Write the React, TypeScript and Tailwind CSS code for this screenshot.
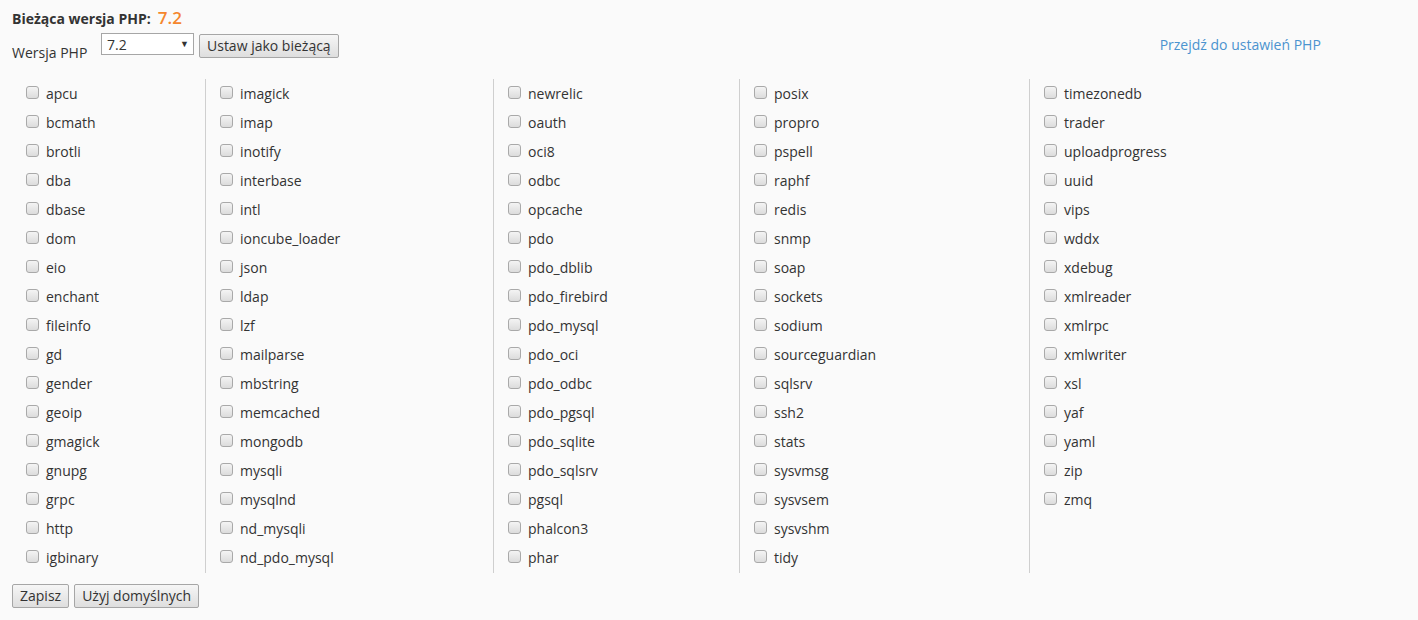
const columns: string[][] = [
  ["apcu", "bcmath", "brotli", "dba", "dbase", "dom", "eio", "enchant", "fileinfo", "gd", "gender", "geoip", "gmagick", "gnupg", "grpc", "http", "igbinary"],
  ["imagick", "imap", "inotify", "interbase", "intl", "ioncube_loader", "json", "ldap", "lzf", "mailparse", "mbstring", "memcached", "mongodb", "mysqli", "mysqlnd", "nd_mysqli", "nd_pdo_mysql"],
  ["newrelic", "oauth", "oci8", "odbc", "opcache", "pdo", "pdo_dblib", "pdo_firebird", "pdo_mysql", "pdo_oci", "pdo_odbc", "pdo_pgsql", "pdo_sqlite", "pdo_sqlsrv", "pgsql", "phalcon3", "phar"],
  ["posix", "propro", "pspell", "raphf", "redis", "snmp", "soap", "sockets", "sodium", "sourceguardian", "sqlsrv", "ssh2", "stats", "sysvmsg", "sysvsem", "sysvshm", "tidy"],
  ["timezonedb", "trader", "uploadprogress", "uuid", "vips", "wddx", "xdebug", "xmlreader", "xmlrpc", "xmlwriter", "xsl", "yaf", "yaml", "zip", "zmq"],
];

const colWidths = ["w-[193px]", "w-[288px]", "w-[246px]", "w-[290px]", "w-[200px]"];

function Box() {
  return (
    <span className="block w-[13px] h-[13px] mb-[2px] rounded-[3px] border border-[#a9a9a9] bg-gradient-to-b from-[#f4f4f4] to-[#dcdcdc] shrink-0" />
  );
}

function Btn({ children }: { children: React.ReactNode }) {
  return (
    <button className="h-[24px] px-[7px] border border-[#a6a6a6] rounded-[2px] bg-gradient-to-b from-[#f6f6f6] to-[#dedede] text-[14px] text-[#333] leading-none">
      {children}
    </button>
  );
}

export default function App() {
  return (
    <div
      className="w-[1418px] h-[620px] bg-[#fafafa] text-[#333] pl-[12px] pt-[5px]"
      style={{ fontFamily: '"Open Sans", "Liberation Sans", sans-serif' }}
    >
      <div className="flex items-baseline gap-[7px] h-[23px]">
        <span className="text-[14px] font-bold">Bieżąca wersja PHP:</span>
        <span className="text-[17px] font-semibold text-[#f5862d]">7.2</span>
      </div>
      <div className="flex items-start h-[46px] mt-[5px]">
        <span className="text-[14px] mt-[9px] w-[89px]">Wersja PHP</span>
        <div className="flex items-center justify-between w-[93px] h-[22px] border border-[#a6a6a6] bg-white pl-[5px] pr-[4px] text-[14px]">
          <span>7.2</span>
          <span className="text-[9px]">▼</span>
        </div>
        <div className="ml-[5px]">
          <Btn>Ustaw jako bieżącą</Btn>
        </div>
        <a className="ml-[821px] mt-[1px] text-[14px] text-[#4b93cf]">Przejdź do ustawień PHP</a>
      </div>
      <div className="flex">
        {columns.map((col, i) => (
          <div
            key={i}
            className={`${colWidths[i]} h-[494px] pl-[14px] ${i > 0 ? "border-l border-[#cfcfcf]" : ""}`}
          >
            {col.map((name) => (
              <div key={name} className="flex items-center h-[29px] gap-[7px] text-[14px]">
                <Box />
                <span>{name}</span>
              </div>
            ))}
          </div>
        ))}
      </div>
      <div className="flex gap-[5px] mt-[11px]">
        <Btn>Zapisz</Btn>
        <Btn>Użyj domyślnych</Btn>
      </div>
    </div>
  );
}
